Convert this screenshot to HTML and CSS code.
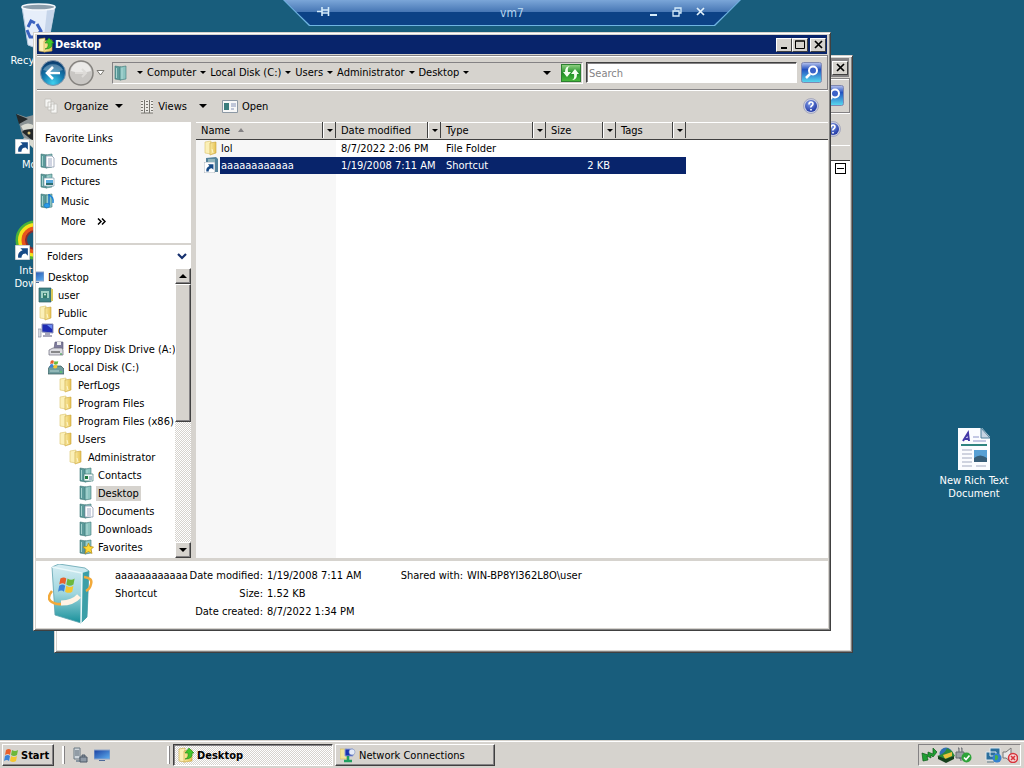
FILE: index.html
```
<!DOCTYPE html>
<html lang="en">
<head>
  <meta charset="UTF-8" />
  <meta name="viewport" content="width=device-width, initial-scale=1.0" />
  <title>vm7</title>
  <link rel="stylesheet" href="styles.css">
</head>
<body>
  <!-- shared icons -->
  <svg class="defs" aria-hidden="true">
    <defs>
      <linearGradient id="gBlue" x1="0" y1="0" x2="0" y2="1"><stop offset="0" stop-color="#b9c4ee"/><stop offset=".35" stop-color="#2452c0"/><stop offset="1" stop-color="#58dcf0"/></linearGradient>
      <linearGradient id="gBook" x1="0" y1="0" x2="0" y2="1"><stop offset="0" stop-color="#d6edf3"/><stop offset=".5" stop-color="#9fd6de"/><stop offset="1" stop-color="#17909a"/></linearGradient>
      <linearGradient id="gFold" x1="0" y1="0" x2="1" y2="0"><stop offset="0" stop-color="#f9e9a0"/><stop offset="1" stop-color="#e6c254"/></linearGradient>
      <radialGradient id="gBack" cx=".5" cy=".9" r=".9"><stop offset="0" stop-color="#3fd0ee"/><stop offset=".5" stop-color="#1479ae"/><stop offset="1" stop-color="#0b3566"/></radialGradient>
      <radialGradient id="gHelp" cx=".4" cy=".3" r=".8"><stop offset="0" stop-color="#7f9be8"/><stop offset="1" stop-color="#142c9c"/></radialGradient>
      <linearGradient id="gDesk" x1="0" y1="0" x2="1" y2="1"><stop offset="0" stop-color="#1a3fa0"/><stop offset="1" stop-color="#5fb0f0"/></linearGradient>
    </defs>
    <symbol id="folder" viewBox="0 0 16 16">
      <path d="M2 2l6-1v13l-6-1z" fill="#fbf0b8" stroke="#dcc268" stroke-width=".6"/>
      <path d="M7 3l6-1v11l-6 2z" fill="url(#gFold)" stroke="#c9a53c" stroke-width=".6"/>
      <path d="M9 9l1 4" stroke="#fff6cc"/>
    </symbol>
    <symbol id="folder-up" viewBox="0 0 16 16">
      <path d="M1 2l6-1v14l-6-1z" fill="#fbf0b8" stroke="#c9a53c" stroke-width=".6"/>
      <path d="M6 4l8-1v11l-8 1z" fill="url(#gFold)" stroke="#c9a53c" stroke-width=".6"/>
      <path d="M7 12q4-1 3-6H7l4-5 5 5h-2q1 6-7 6z" fill="#43c52c" stroke="#1d8a17" stroke-width=".6"/>
    </symbol>
    <symbol id="lib" viewBox="0 0 16 16">
      <path d="M2 1l6 1v13l-6-1z" fill="#5b9a9a" stroke="#3c7676" stroke-width=".6"/>
      <path d="M7 2l6-1v13l-6 1z" fill="#8cc4c0" stroke="#3c7676" stroke-width=".6"/>
      <path d="M9 3v11M3.500 3v10" stroke="#b9e0dc" stroke-width=".8"/>
    </symbol>
    <symbol id="lib-doc" viewBox="0 0 16 16">
      <use href="#lib"/><path d="M7 3h6l2 2v9H7z" fill="#fff" stroke="#7e8ca8" stroke-width=".7"/>
      <path d="M9 6h4M9 8h4M9 10h4M9 12h4" stroke="#8b95b8" stroke-width=".8"/>
    </symbol>
    <symbol id="lib-pic" viewBox="0 0 16 16">
      <use href="#lib"/><path d="M5 5h10v8H5z" fill="#fff" stroke="#7e9cae" stroke-width=".7"/>
      <path d="M7 7h7v3H7z" fill="#58a9dc"/><path d="M7 10h7v2H7z" fill="#2d6e70"/>
    </symbol>
    <symbol id="lib-music" viewBox="0 0 16 16">
      <use href="#lib"/><path d="M10 2q5 2 4 8" fill="none" stroke="#1d86d8" stroke-width="1.500"/><path d="M10 1v11" stroke="#1672c4" stroke-width="1.500"/><ellipse cx="8" cy="12.500" rx="2.800" ry="2.200" fill="#2a9be8" stroke="#1672c4" stroke-width=".6"/>
    </symbol>
    <symbol id="lib-contact" viewBox="0 0 16 16">
      <use href="#lib"/><path d="M6 7h9v7H6z" fill="#f4faf8" stroke="#44807c" stroke-width=".7"/><path d="M7 9h3v3H7z" fill="#207a40"/><path d="M11 10h3M11 12h3" stroke="#5c80a0"/>
    </symbol>
    <symbol id="lib-star" viewBox="0 0 16 16">
      <use href="#lib"/><path d="M10.500 4l1.500 3.500 3.500.5-2.500 2.500 1 4-3.500-2-3.500 2 1-4L5 8l4-.5z" fill="#ffd934" stroke="#b58a12" stroke-width=".7"/>
    </symbol>
    <symbol id="user" viewBox="0 0 16 16">
      <path d="M1 1h12v14H1z" fill="#3f8488" stroke="#2b5c60" stroke-width=".7"/><path d="M13 2h2v12h-2z" fill="#d9c95c"/>
      <path d="M3 4h8v7H3z" fill="#9fd0c4"/><path d="M5 6h4v5H5z" fill="#2f7a6c"/><circle cx="7" cy="7.500" r="1" fill="#d9efe2"/>
    </symbol>
    <symbol id="computer" viewBox="0 0 16 16">
      <path d="M0 6h3v8H0z" fill="#d7dbe2" stroke="#8a90a0" stroke-width=".7"/><path d="M4 1h11v9l-11-1z" fill="#1f2db4" stroke="#8d93b8"/>
      <path d="M9 2h5v4z" fill="#6a8cf0"/><path d="M7 10h5v2h2v2H5v-2h2z" fill="#a9a9bc"/>
    </symbol>
    <symbol id="floppy" viewBox="0 0 16 16">
      <path d="M7 1h8v7H6z" fill="#7e7c9c" stroke="#55536e" stroke-width=".6"/><path d="M9 1h4v3H9z" fill="#eee"/>
      <path d="M1 9l4-2h9l1 2v5H1z" fill="#dcdce2" stroke="#6b6b7b" stroke-width=".7"/><path d="M3 11h9" stroke="#333"/><path d="M12 13h2" stroke="#30a040"/>
    </symbol>
    <symbol id="flag" viewBox="0 0 16 16">
      <path d="M2 3q3-2 5 0L6 8Q4 6 1 8z" fill="#e8602c"/><path d="M8 3q3 2 6 0l-1 5q-3 2-6 0z" fill="#6cb83c"/>
      <path d="M1 9q3-2 5 0l-1 5q-2-2-5 0z" fill="#3b83d8"/><path d="M7 9q3 2 6 0l-1 5q-3 2-6 0z" fill="#f4c630"/>
    </symbol>
    <symbol id="disk" viewBox="0 0 16 16">
      <path d="M0 10l2-3h11l3 3v5H0z" fill="#6f9c9e" stroke="#355658" stroke-width=".7"/><path d="M2 12h9" stroke="#b5d3d0"/>
      <use href="#flag" x="1" y="0" width="11" height="10"/><path d="M12 13h2" stroke="#50e050"/>
    </symbol>
    <symbol id="monitor" viewBox="0 0 16 16"><path d="M0 3h16v9H0z" fill="url(#gDesk)" stroke="#8fa4c8"/><path d="M5 13h6v1H5z" fill="#4e6a9a"/></symbol>
    <symbol id="loupe" viewBox="0 0 21 21">
      <rect x=".5" y=".5" width="20" height="20" rx="2" fill="url(#gBlue)" stroke="#8088b0"/>
      <circle cx="12" cy="8.500" r="4" fill="#3b62c8" stroke="#fff" stroke-width="2"/><path d="M9 12l-4 4" stroke="#fff" stroke-width="2.500"/>
    </symbol>
    <symbol id="help" viewBox="0 0 16 16">
      <circle cx="8" cy="8" r="7.500" fill="#c9cde0" stroke="#8a8fae" stroke-width=".6"/><circle cx="8" cy="8" r="6" fill="url(#gHelp)"/>
      <path d="M6 6.500q0-2.500 2-2.500t2 2q0 1-1.200 1.700T8 9.500M8 11v1.500" fill="none" stroke="#fff" stroke-width="1.600"/>
    </symbol>
    <symbol id="shortcut" viewBox="0 0 14 14">
      <path d="M0 0h14v14H0z" fill="#fff" stroke="#9aa6b0"/><path d="M3 12q-1-5 4-7L5 3h7v7l-2-2q-4 0-4 4z" fill="#164a86"/>
    </symbol>
    <symbol id="x" viewBox="0 0 9 9"><path d="M1 1l7 7M8 1L1 8" stroke="currentColor" stroke-width="1.700"/></symbol>
    <symbol id="net" viewBox="0 0 16 16">
      <path d="M0 2h7v10H0z" fill="#f3e49a" stroke="#cdb558" stroke-width=".6"/><path d="M5 2h8v7H5z" fill="#1c34b0" stroke="#8ea0d8"/>
      <circle cx="12" cy="5" r="3" fill="#e4eaf8" stroke="#7f93c0" stroke-width=".6"/><path d="M8 9v4M4 14h8" stroke="#20a060" stroke-width="2.500"/>
    </symbol>
  </svg>

  <main class="desktop">
    <div class="desk-icon recycle">
      <svg width="40" height="48" viewBox="0 0 40 48">
        <path d="M3 5l6 38q10 5 20 0l7-38z" fill="#e6eefa" stroke="#b8cade"/>
        <path d="M28 8h7l-6 34-5 2z" fill="#c6d5ea"/>
        <ellipse cx="19.500" cy="5" rx="16.500" ry="3" fill="#8b9dab" stroke="#f5f8fc" stroke-width="1.500"/>
        <path d="M9 25l3-6 4 2M18 22l4 7-3 3M8 28l3 7h4" fill="none" stroke="#3b62c0" stroke-width="3"/>
      </svg>
      <span>Recycle Bin</span>
    </div>
    <div class="desk-icon fox">
      <svg width="48" height="42" viewBox="0 0 48 42">
        <path d="M2 2l9 3q13-5 26 0l9-3-3 18-16 19q-16-4-21-20z" fill="#8a9294"/><path d="M1 2l12 5-9 5zM7 20q6-6 13-2l-2 11z" fill="#23282a"/>
        <path d="M6 14q7-5 14 0l-4 3-8 1zM8 26l10 2v8z" fill="#dadbd2"/><circle cx="14" cy="21" r="1.500" fill="#d8c37a"/>
        <use href="#shortcut" x="0" y="27" width="15" height="15"/>
      </svg>
      <span>Mozilla</span>
    </div>
    <div class="desk-icon idm">
      <svg width="48" height="42" viewBox="0 0 48 42">
        <circle cx="20" cy="22" r="18" fill="none" stroke="#4bb338" stroke-width="3"/><circle cx="20" cy="22" r="15" fill="none" stroke="#f5e31c" stroke-width="4"/><circle cx="20" cy="22" r="11.500" fill="none" stroke="#e8541c" stroke-width="4"/><circle cx="20" cy="22" r="9" fill="none" stroke="#8c2c2c" stroke-width="2"/>
        <use href="#shortcut" x="0" y="27" width="15" height="15"/>
      </svg>
      <span>Internet<br>Download</span>
    </div>
    <div class="desk-icon rtf">
      <svg width="32" height="42" viewBox="0 0 32 42">
        <path d="M0 0h24l8 9v33H0z" fill="#fbfcff"/><path d="M23 0v10h9z" fill="#c7d5e4" stroke="#4d7f9b"/>
        <path d="M5 13l5-8 1 8M7 11h4" fill="none" stroke="#4338a8" stroke-width="2"/>
        <path d="M15 9h6M15 13h13" stroke="#8c94c8"/><path d="M3 17h26" stroke="#2f8480" stroke-width="2"/>
        <path d="M4 22h10M4 26h10M4 30h10M4 34h10M4 38h10M18 38h10" stroke="#a3aac0"/>
        <path d="M16 22h13v12H16z" fill="#58a0d4"/><path d="M16 30q6-5 13 0v4H16z" fill="#375e78"/>
      </svg>
      <span>New Rich Text<br>Document</span>
    </div>

    <header class="rdp-bar">
      <div class="rdp-inner">
        <button aria-label="Pin"><svg width="13" height="9" viewBox="0 0 13 9"><path d="M0 4.500h5M5 0v9M11.500 0v9M5 3h6M5 6h6" stroke="#d5ecfb" stroke-width="1.600"/></svg></button>
        <span class="rdp-title">vm7</span>
        <button aria-label="Minimize"><svg width="8" height="9" viewBox="0 0 8 9"><path d="M0 8h7" stroke="#d5ecfb" stroke-width="2"/></svg></button>
        <button aria-label="Restore"><svg width="10" height="10" viewBox="0 0 10 10"><path d="M3 3V1h6v5H7M1 4h6v5H1z" fill="none" stroke="#d5ecfb" stroke-width="1.300"/></svg></button>
        <button class="rdp-close" aria-label="Close"><svg width="9" height="9"><use href="#x"/></svg></button>
      </div>
    </header>

    <section class="window back-window">
      <div class="titlebar inactive">
        <span class="title"></span>
        <button class="win-btn" aria-label="Close"><svg width="9" height="9"><use href="#x"/></svg></button>
      </div>
      <div class="navbar"><span class="grow"></span><button class="loupe" aria-label="Search"><svg width="21" height="21"><use href="#loupe"/></svg></button></div>
      <div class="commands"><span class="grow"></span><button aria-label="Help"><svg width="16" height="16"><use href="#help"/></svg></button></div>
      <div class="back-strip"></div>
      <div class="back-body"><button class="collapse" aria-label="Collapse group"></button></div>
    </section>

    <section class="window main-window">
      <div class="titlebar">
        <svg width="16" height="16"><use href="#folder-up"/></svg>
        <h1 class="title">Desktop</h1>
        <button class="win-btn" aria-label="Minimize"><svg width="9" height="9"><path d="M1 8h6" stroke="#000" stroke-width="2"/></svg></button>
        <button class="win-btn" aria-label="Maximize"><svg width="10" height="9"><path d="M.500 1h9v7.500h-9zM0 1h10" fill="none" stroke="#000"/></svg></button>
        <button class="win-btn close" aria-label="Close"><svg width="9" height="9"><use href="#x"/></svg></button>
      </div>

      <div class="navbar">
        <div class="travel">
          <button aria-label="Back"><svg width="26" height="26" viewBox="0 0 26 26"><circle cx="13" cy="13" r="12.500" fill="url(#gBack)" stroke="#7e93aa"/><path d="M3 10a11 10 0 0 1 20 0q-10 3-20 0z" fill="#fff" opacity=".3"/><path d="M20 13H8M13 7l-6 6 6 6" fill="none" stroke="#fff" stroke-width="2.600"/></svg></button>
          <button aria-label="Forward"><svg width="26" height="26" viewBox="0 0 26 26"><circle cx="13" cy="13" r="12" fill="#c9c7c4" stroke="#85837f" stroke-width="1.500"/><path d="M3 11a10 9 0 0 1 20 0q-10 3-20 0z" fill="#ebeae8"/><path d="M7 13h11M14 9l4 4-4 4" fill="none" stroke="#dddbd8" stroke-width="2"/></svg></button>
          <button aria-label="Recent pages"><svg width="9" height="6" viewBox="0 0 9 6"><path d="M1 .500h7L4.500 5z" fill="#fff" stroke="#7b7974"/></svg></button>
        </div>
        <nav class="crumbs" aria-label="Address">
          <svg width="16" height="18" viewBox="0 0 16 16"><use href="#lib"/></svg>
          <i class="arrow"></i><a href="#">Computer</a>
          <i class="arrow"></i><a href="#">Local Disk (C:)</a>
          <i class="arrow"></i><a href="#">Users</a>
          <i class="arrow"></i><a href="#">Administrator</a>
          <i class="arrow"></i><a href="#">Desktop</a>
          <i class="arrow"></i>
          <span class="grow"></span>
          <button aria-label="Previous locations"><i class="arrow big"></i></button>
          <button class="refresh" aria-label="Refresh"><svg width="18" height="16" viewBox="0 0 18 16"><path d="M8 1q-3 1-2 6h3l-4 5-4-5h2q0-6 5-6zM10 15q3-1 2-6H9l4-5 4 5h-2q0 6-5 6z" fill="#f4fff0"/></svg></button>
        </nav>
        <input class="search" type="text" placeholder="Search" aria-label="Search">
        <button class="loupe" aria-label="Go"><svg width="21" height="21"><use href="#loupe"/></svg></button>
      </div>

      <div class="commands">
        <button class="organize"><svg width="16" height="16" viewBox="0 0 16 16"><path d="M2 1h6v8H2zM5 4h6v8H5zM8 6h6v9H8z" fill="#f6f6f4" stroke="#c2c0bb" stroke-width=".8"/></svg>Organize<i class="arrow big"></i></button>
        <button class="views"><svg width="14" height="15" viewBox="0 0 14 15"><path d="M1 1h12v13H1z" fill="#eceae6"/><path d="M4.500 1v13M9.500 1v13M1 2.500h2M1 5.500h2M1 8.500h2M1 11.500h2M6 2.500h2M6 5.500h2M6 8.500h2M6 11.500h2M11 2.500h2M11 5.500h2M11 8.500h2M11 11.500h2M1 14h12" stroke="#77756f"/></svg>Views<i class="arrow big"></i></button>
        <button class="open"><svg width="16" height="13" viewBox="0 0 16 13"><path d="M.500 .500h15v12H.500z" fill="#f7f7f7" stroke="#8c98a4"/><path d="M2 3h5v7H2z" fill="#3a7d7d"/><path d="M9 4h5M9 6h5M9 9h3" stroke="#8794b8"/></svg>Open</button>
        <span class="grow"></span>
        <button aria-label="Help"><svg width="16" height="16"><use href="#help"/></svg></button>
      </div>

      <div class="panes">
        <aside class="sidebar">
          <div class="favorites">
            <h2>Favorite Links</h2>
            <a href="#"><svg width="16" height="16"><use href="#lib-doc"/></svg>Documents</a>
            <a href="#"><svg width="16" height="16"><use href="#lib-pic"/></svg>Pictures</a>
            <a href="#"><svg width="16" height="16"><use href="#lib-music"/></svg>Music</a>
            <a href="#" class="more">More <svg width="9" height="7" viewBox="0 0 9 7"><path d="M1 .500l3 3-3 3M5 .500l3 3-3 3" fill="none" stroke="#000" stroke-width="1.500"/></svg></a>
          </div>
          <button class="folders-head">Folders<svg width="10" height="7" viewBox="0 0 10 7"><path d="M1 1l4 4 4-4" fill="none" stroke="#16306e" stroke-width="2.200"/></svg></button>
          <div class="tree-wrap">
            <ul class="tree">
              <li class="l0"><svg width="8" height="14" viewBox="8 1 8 14"><use href="#monitor" width="16" height="16"/></svg><span>Desktop</span></li>
              <li class="l1"><svg width="16" height="16"><use href="#user"/></svg><span>user</span></li>
              <li class="l1"><svg width="16" height="16"><use href="#folder"/></svg><span>Public</span></li>
              <li class="l1"><svg width="16" height="16"><use href="#computer"/></svg><span>Computer</span></li>
              <li class="l2"><svg width="16" height="16"><use href="#floppy"/></svg><span>Floppy Disk Drive (A:)</span></li>
              <li class="l2"><svg width="16" height="16"><use href="#disk"/></svg><span>Local Disk (C:)</span></li>
              <li class="l3"><svg width="16" height="16"><use href="#folder"/></svg><span>PerfLogs</span></li>
              <li class="l3"><svg width="16" height="16"><use href="#folder"/></svg><span>Program Files</span></li>
              <li class="l3"><svg width="16" height="16"><use href="#folder"/></svg><span>Program Files (x86)</span></li>
              <li class="l3"><svg width="16" height="16"><use href="#folder"/></svg><span>Users</span></li>
              <li class="l4"><svg width="16" height="16"><use href="#folder"/></svg><span>Administrator</span></li>
              <li class="l5"><svg width="16" height="16"><use href="#lib-contact"/></svg><span>Contacts</span></li>
              <li class="l5 current"><svg width="16" height="16"><use href="#lib"/></svg><span>Desktop</span></li>
              <li class="l5"><svg width="16" height="16"><use href="#lib-doc"/></svg><span>Documents</span></li>
              <li class="l5"><svg width="16" height="16"><use href="#lib"/></svg><span>Downloads</span></li>
              <li class="l5"><svg width="16" height="16"><use href="#lib-star"/></svg><span>Favorites</span></li>
            </ul>
            <div class="scrollbar">
              <button aria-label="Scroll up"><i class="arrow big up"></i></button>
              <div class="thumb"></div>
              <div class="track"></div>
              <button aria-label="Scroll down"><i class="arrow big"></i></button>
            </div>
          </div>
        </aside>

        <div class="files">
          <table>
            <colgroup><col class="c-name"><col class="c-date"><col class="c-date"><col class="c-small"><col class="c-small"><col></colgroup>
            <thead>
              <tr>
                <th><div><span>Name<i class="arrow up sort"></i></span><button aria-label="Filter name"><i class="arrow"></i></button></div></th>
                <th><div><span>Date modified</span><button aria-label="Filter date"><i class="arrow"></i></button></div></th>
                <th><div><span>Type</span><button aria-label="Filter type"><i class="arrow"></i></button></div></th>
                <th><div><span>Size</span><button aria-label="Filter size"><i class="arrow"></i></button></div></th>
                <th><div><span>Tags</span><button aria-label="Filter tags"><i class="arrow"></i></button></div></th>
                <th></th>
              </tr>
            </thead>
            <tbody>
              <tr>
                <td><div class="file"><svg width="16" height="16"><use href="#folder"/></svg><span>lol</span></div></td>
                <td>8/7/2022 2:06 PM</td><td>File Folder</td><td class="num"></td><td></td><td></td>
              </tr>
              <tr class="selected">
                <td><div class="file"><svg width="16" height="16"><path d="M3 1l10-1 2 2v13H3z" fill="#54839c"/><path d="M5 2h7v3H5z" fill="#8eb4bd"/><use href="#shortcut" x="1" y="5" width="11" height="11"/></svg><span>aaaaaaaaaaaa</span></div></td>
                <td>1/19/2008 7:11 AM</td><td>Shortcut</td><td class="num">2 KB</td><td></td><td></td>
              </tr>
            </tbody>
          </table>
        </div>
      </div>

      <footer class="details">
        <svg width="46" height="60" viewBox="0 0 46 60">
          <path d="M4 3l7-3 26 4 4 3-2 46-6 6-26-8z" fill="url(#gBook)" stroke="#5ea2ae" stroke-width=".8"/>
          <path d="M34 9l7-2-2 46-6 6z" fill="#3b9fa8"/><path d="M4 3l30 6-1 50" fill="none" stroke="#e9f8fa" stroke-width="1.500"/>
          <use href="#flag" x="10" y="11" width="19" height="19"/>
          <path d="M4 27q-8 10 5 13 10 1 20-6" fill="none" stroke="#f2a93a" stroke-width="2.500"/><path d="M13 39q12 0 18-7" fill="none" stroke="#fff3e4" stroke-width="5"/>
          <path d="M36 13q9 1 7 7-1 5-5 7" fill="none" stroke="#f2a93a" stroke-width="2.500"/>
        </svg>
        <div class="props">
          <span>aaaaaaaaaaaa</span><b>Date modified:</b><span>1/19/2008 7:11 AM</span><b>Shared with:</b><span>WIN-BP8YI362L8O\user</span>
          <span>Shortcut</span><b>Size:</b><span>1.52 KB</span><b></b><span></span>
          <span></span><b>Date created:</b><span>8/7/2022 1:34 PM</span><b></b><span></span>
        </div>
      </footer>
    </section>
  </main>

  <footer class="taskbar">
    <button class="task-btn start"><svg width="16" height="16"><use href="#flag"/></svg>Start</button>
    <div class="quick">
      <button aria-label="Server Manager"><svg width="16" height="16" viewBox="0 0 16 16"><path d="M2 1h6v11H2z" fill="#cfd6dc" stroke="#6b7882"/><path d="M3 4h4M3 6h4M3 8h4" stroke="#55636e"/><path d="M4 13h5v2H4z" fill="#8794a0"/><path d="M8 10h7v5H8zM10 10V8h3v2" fill="#8e99a6" stroke="#4f5b68"/></svg></button>
      <button aria-label="Show desktop"><svg width="16" height="16"><use href="#monitor"/></svg></button>
    </div>
    <div class="tasks">
      <button class="task-btn active"><svg width="16" height="16"><use href="#folder-up"/></svg>Desktop</button>
      <button class="task-btn"><svg width="16" height="16"><use href="#net"/></svg>Network Connections</button>
    </div>
    <div class="tray">
      <svg width="16" height="16" viewBox="0 0 16 16"><path d="M1 6l6 2V5l5 2V1l4 4-4 5-2-2v3L6 9l1 4-5 1z" fill="#1fa032" stroke="#0f5a1a" stroke-width=".7"/></svg>
      <svg width="18" height="16" viewBox="0 0 18 16"><circle cx="9" cy="7" r="6.500" fill="#2f6fb4"/><path d="M0 9q8-2 10-8l5 3 3 5-9 4z" fill="#2c8a3a"/><path d="M6 8l9-3v4l-7 3z" fill="#e9c23c"/><path d="M1 9l8 3 8-3v3l-8 4-8-4z" fill="#15401c"/></svg>
      <svg width="17" height="16" viewBox="0 0 17 16"><path d="M3 1h1v4M6 1h1v4M1 5h8v6H1zM4 11h2v3" fill="#9ba0a4" stroke="#666b70"/><circle cx="11.500" cy="10.500" r="5" fill="#2fa33a"/><path d="M9 10.500l2 2 3.500-4" fill="none" stroke="#fff" stroke-width="1.700"/></svg>
      <svg class="net-tray" width="17" height="16" viewBox="0 0 17 16"><path d="M5 1h10v8H5zM1 5h10v8H1z" fill="#2b6f9c" stroke="#dfe8ee"/><path d="M2 15h7" stroke="#5d7a8a"/><circle cx="12" cy="11" r="4.500" fill="#3480d0"/><path d="M10 8q4 0 3 3t-3 2z" fill="#49b04c"/></svg>
      <svg width="16" height="16" viewBox="0 0 16 16"><path d="M1 5h3l5-4v14l-5-4H1z" fill="#e8e8e8" stroke="#777"/><circle cx="11" cy="11" r="4.500" fill="#f4d8d8" stroke="#d8343c" stroke-width="1.500"/><path d="M9 9l4 4M13 9l-4 4" stroke="#d8343c" stroke-width="1.600"/></svg>
    </div>
  </footer>
</body>
</html>
```
FILE: styles.css
```
* {
  box-sizing: border-box;
}
html, body {
  height: 100%;
  margin: 0;
}
body {
  display: flex;
  flex-direction: column;
  font-family: "DejaVu Sans Condensed", "Noto Sans", sans-serif;
  font-size: 11px;
  line-height: 13px;
  color: #000;
  background: #185d7c;
  overflow: hidden;
}
.defs {
  position: absolute;
  width: 0;
  height: 0;
}
svg {
  display: block;
  flex: none;
}
button {
  display: flex;
  align-items: center;
  justify-content: center;
  padding: 0;
  border: none;
  background: none;
  font: inherit;
  color: inherit;
}
a {
  color: inherit;
  text-decoration: none;
}
.grow {
  flex: 1;
}
.arrow {
  flex: none;
  border: 3px solid transparent;
  border-top-color: #000;
  border-bottom: none;
}
.arrow.big {
  border-width: 4px;
  border-bottom: none;
}
.arrow.up {
  border-top: none;
  border-bottom: 4px solid #000;
}
.arrow.sort {
  border-bottom-color: #848284;
}

/* desktop */
.desktop {
  position: relative;
  flex: 1;
  overflow: hidden;
}
.desk-icon {
  position: absolute;
  width: 80px;
  display: flex;
  flex-direction: column;
  align-items: center;
  gap: 4px;
  color: #fff;
  text-align: center;
}
.recycle { left: -1px; top: 2px; }
.fox { left: -1px; top: 112px; }
.idm { left: -1px; top: 218px; }
.rtf { right: 10px; top: 428px; }

.rdp-bar {
  position: absolute;
  top: 0;
  left: 50%;
  width: 458px;
  transform: translateX(-50%);
  padding-bottom: 1px;
  background: #6fb4e2;
  clip-path: polygon(0 0, 100% 0, calc(100% - 26px) 100%, 26px 100%);
}
.rdp-inner {
  display: flex;
  align-items: center;
  gap: 14px;
  height: 25px;
  padding: 0 36px 2px 34px;
  background: linear-gradient(#7ba6d8, #4676b4 12px, #0c4286 12px, #0c4286);
  clip-path: polygon(1px 0, calc(100% - 1px) 0, calc(100% - 27px) 100%, 27px 100%);
}
.rdp-title {
  flex: 1;
  padding: 3px 0 0 44px;
  text-align: center;
  font-size: 12px;
  color: #b5d5ee;
}
.rdp-close {
  color: #e3f2fc;
}

/* windows */
.window {
  position: absolute;
  display: flex;
  flex-direction: column;
  padding: 2px;
  background: #d6d3ce;
  border: 1px solid;
  border-color: #d6d3ce #404040 #404040 #d6d3ce;
  box-shadow: inset 1px 1px #fff, inset -1px -1px #808080;
}
.main-window { inset: 32px 193px 109px 33px; }
.back-window { inset: 55px 171px 87px 54px; }
.titlebar {
  display: flex;
  align-items: center;
  height: 19px;
  margin: 0 1px;
  padding: 0 1px;
  background: #08246b;
  color: #fff;
}
.inactive {
  background: #848284;
}
.title {
  flex: 1;
  margin: 0 0 0 1px;
  font-size: 11px;
  font-weight: bold;
}
.win-btn {
  width: 16px;
  height: 14px;
  background: #d6d3ce;
  border: 1px solid;
  border-color: #fff #404040 #404040 #fff;
  color: #000;
}
.win-btn.close {
  margin-left: 2px;
}
.navbar {
  display: flex;
  align-items: center;
  gap: 3px;
  height: 35px;
  margin: 1px 0 0 1px;
  padding: 0 5px 0 3px;
  border: 1px solid #848284;
  border-left: none;
  box-shadow: inset 0 1px #fff, 0 1px #fff;
}
.travel {
  display: flex;
  align-items: center;
  gap: 2px;
  margin-right: 4px;
}
.crumbs {
  flex: 1;
  display: flex;
  align-items: center;
  height: 22px;
  border: 1px solid;
  border-color: #848284 #fff #fff #848284;
}
.crumbs a {
  margin: 0 4px;
}
.crumbs > svg {
  margin-right: 8px;
}
.refresh {
  width: 20px;
  height: 18px;
  margin: 0 1px 0 10px;
  background: linear-gradient(#8ed080, #1f8f26 50%, #49b83c);
  border: 1px solid #2c7f31;
}
.search {
  width: 211px;
  height: 21px;
  padding: 2px 2px 0;
  border: 1px solid;
  border-color: #404040 #fff #fff #404040;
  box-shadow: inset 1px 1px #848284;
  background: #fff;
  font: inherit;
}
.search::placeholder {
  color: #848284;
}
.loupe {
  margin-left: 1px;
}
.commands {
  display: flex;
  align-items: center;
  height: 32px;
  padding: 0 9px 0 7px;
}
.organize { gap: 5px; }
.organize .arrow { margin-left: 2px; }
.views { gap: 4px; margin-left: 17px; }
.views .arrow { margin-left: 8px; }
.open { gap: 4px; margin-left: 15px; }

/* panes */
.panes {
  flex: 1;
  display: flex;
  gap: 5px;
  min-height: 0;
}
.sidebar {
  width: 155px;
  display: flex;
  flex-direction: column;
  background: #fff;
}
.favorites {
  padding: 7px 3px 12px;
  border-bottom: 2px solid #d6d3ce;
}
.favorites h2 {
  margin: 0 0 2px 6px;
  font-size: 11px;
  font-weight: normal;
  line-height: 20px;
}
.favorites a {
  display: flex;
  align-items: center;
  gap: 6px;
  height: 20px;
}
.favorites .more {
  gap: 11px;
  padding-left: 22px;
}
.folders-head {
  justify-content: space-between;
  height: 23px;
  padding: 0 4px 0 11px;
}
.tree-wrap {
  flex: 1;
  display: flex;
  min-height: 0;
}
.tree {
  flex: 1;
  margin: 0;
  padding: 0;
  list-style: none;
  overflow: hidden;
  white-space: nowrap;
}
.tree li {
  display: flex;
  align-items: center;
  gap: 2px;
  height: 18px;
}
.tree span {
  padding: 1px 2px;
}
.tree .current span {
  background: #d6d3ce;
}
.l1 { padding-left: 2px; }
.l2 { padding-left: 12px; }
.l3 { padding-left: 22px; }
.l4 { padding-left: 32px; }
.l5 { padding-left: 42px; }
.scrollbar {
  width: 16px;
  display: flex;
  flex-direction: column;
}
.scrollbar button, .thumb {
  height: 16px;
  background: #d6d3ce;
  border: 1px solid;
  border-color: #fff #404040 #404040 #fff;
  box-shadow: inset -1px -1px #848284;
}
.scrollbar .thumb {
  height: 138px;
}
.track {
  flex: 1;
  background: repeating-conic-gradient(#fff 0 25%, #d6d3ce 0 50%) 0 0 / 2px 2px;
}
.files {
  flex: 1;
  min-width: 0;
  background: linear-gradient(to right, #f7f7f7 140px, #fff 140px);
}
table {
  width: 100%;
  table-layout: fixed;
  border-collapse: collapse;
}
.c-name { width: 140px; }
.c-date { width: 105px; }
.c-small { width: 70px; }
th {
  height: 17px;
  padding: 0;
  background: #d6d3ce;
  border-bottom: 1px solid #404040;
  box-shadow: inset 0 1px #fff;
  font-weight: normal;
  text-align: left;
}
th div {
  display: flex;
  height: 16px;
}
th span {
  flex: 1;
  display: flex;
  align-items: center;
  gap: 8px;
  padding-left: 5px;
  border-right: 1px solid #404040;
  white-space: nowrap;
}
th button {
  width: 13px;
  border-left: 1px solid #fff;
  border-right: 1px solid #404040;
}
td {
  height: 17px;
  padding: 0 0 0 5px;
  white-space: nowrap;
}
td:first-child {
  padding-left: 7px;
}
.num {
  padding: 0 6px 0 0;
  text-align: right;
}
.file {
  display: flex;
  align-items: center;
  gap: 1px;
}
.file span {
  flex: 1;
  padding: 2px 1px;
}
.selected .file span, .selected td:not(:first-child):not(:last-child) {
  background: #08246b;
  color: #fff;
}

/* details pane */
.details {
  display: flex;
  gap: 21px;
  margin-top: 3px;
  padding: 3px 0 4px 12px;
  background: #fff;
}
.props {
  display: grid;
  grid-template-columns: 72px 76px 135px 65px auto;
  grid-auto-rows: 18px;
  align-items: center;
  padding-top: 2px;
  white-space: nowrap;
}
.props b {
  font-weight: normal;
  text-align: right;
}
.props b + span {
  padding-left: 4px;
}

/* window behind */
.back-strip {
  height: 16px;
  border-top: 1px solid #fff;
  border-bottom: 1px solid #404040;
}
.back-body {
  flex: 1;
  display: flex;
  justify-content: flex-end;
  padding: 2px 4px;
  background: #fff;
}
.collapse {
  width: 11px;
  height: 11px;
  border: 1px solid #000;
  background: linear-gradient(#000, #000) center / 7px 1px no-repeat;
}

/* taskbar */
.taskbar {
  display: flex;
  align-items: center;
  height: 28px;
  padding: 1px 3px 0 2px;
  background: #d6d3ce;
  border-top: 1px solid #d6d3ce;
  box-shadow: inset 0 1px #fff;
}
.task-btn {
  width: 160px;
  height: 22px;
  justify-content: flex-start;
  gap: 3px;
  padding: 0 4px;
  border: 1px solid;
  border-color: #fff #404040 #404040 #fff;
  box-shadow: inset -1px -1px #848284;
}
.task-btn.active {
  border-color: #404040 #fff #fff #404040;
  box-shadow: inset 1px 1px #848284;
  background: repeating-conic-gradient(#fff 0 25%, #d6d3ce 0 50%) 0 0 / 2px 2px;
  font-weight: bold;
}
.start {
  width: 52px;
  gap: 1px;
  padding: 0 1px;
  font-weight: bold;
}
.quick {
  display: flex;
  align-items: center;
  gap: 6px;
  width: 107px;
  height: 18px;
  margin: 0 4px 0 8px;
  padding-left: 8px;
  border: 1px solid;
  border-width: 0 2px;
  border-color: #fff;
  box-shadow: 1px 0 #848284, inset 1px 0 #848284;
}
.tasks {
  flex: 1;
  display: flex;
  gap: 2px;
}
.tray {
  display: flex;
  align-items: center;
  height: 22px;
  padding: 0 2px;
  border: 1px solid;
  border-color: #848284 #fff #fff #848284;
}
.net-tray {
  margin-left: 13px;
}
```
